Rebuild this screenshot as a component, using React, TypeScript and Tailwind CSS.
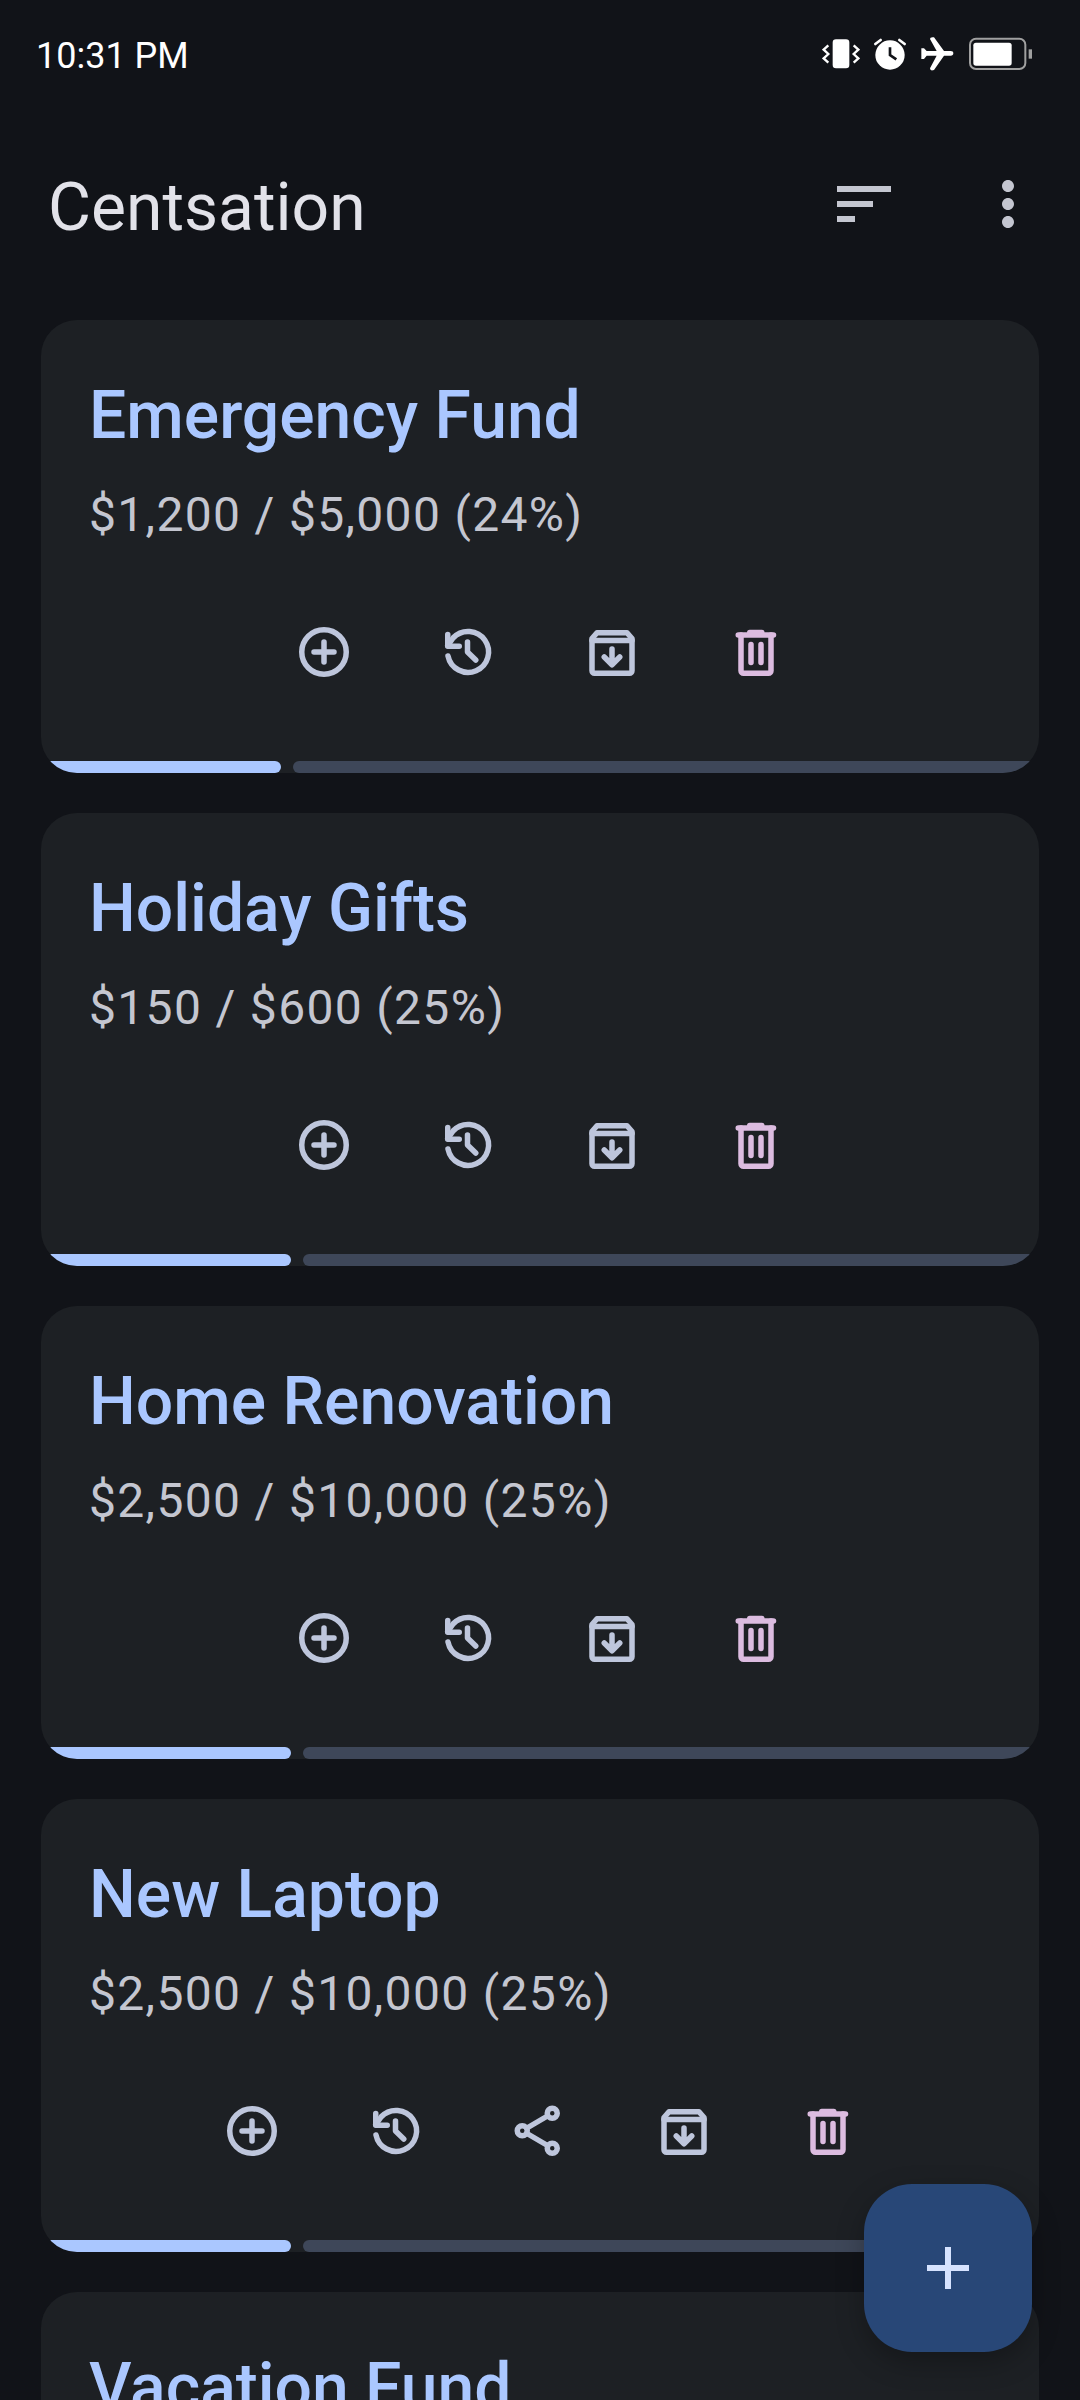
import React from "react";

const C = "#bec6dc";
const P = "#dcbce0";

const sp = {
  fill: "none",
  strokeWidth: 2.2,
  strokeLinecap: "round" as const,
  strokeLinejoin: "round" as const,
};

function Add() {
  return (
    <svg width="60" height="60" viewBox="0 0 24 24" stroke={C} {...sp}>
      <circle cx="12" cy="12" r="8.9" />
      <path d="M12 8v8M8 12h8" />
    </svg>
  );
}
function History() {
  return (
    <svg width="60" height="60" viewBox="0 0 24 24" stroke={C} {...sp}>
      <path d="M4 13.6A8.2 8.2 0 1 0 6.1 6.3L3.9 9.4" />
      <path d="M3.9 5v4.7h4.6" />
      <path d="M11.8 8v4l3.3 3.2" />
    </svg>
  );
}
function Share() {
  return (
    <svg width="60" height="60" viewBox="0 0 24 24" stroke={C} {...sp}>
      <circle cx="16.9" cy="4.9" r="2" />
      <circle cx="4.9" cy="11.9" r="2" />
      <circle cx="16.9" cy="18.9" r="2" />
      <path d="M6.8 10.8L15 6M6.8 13L15 17.8" />
    </svg>
  );
}
function Archive() {
  return (
    <svg width="60" height="60" viewBox="0 0 24 24" stroke={C} {...sp}>
      <path d="M6 4.3H18L20 6.6V19.5a1 1 0 0 1-1 1H5a1 1 0 0 1-1-1V6.6Z" />
      <path d="M4 7.4H20" />
      <path d="M12 10.8V16.8M8.9 14L12 17.1 15.1 14" />
    </svg>
  );
}
function Trash() {
  return (
    <svg width="60" height="60" viewBox="0 0 24 24" stroke={P} {...sp}>
      <path d="M4.9 5.2H19" />
      <path d="M9.5 4.2H14.3" />
      <path d="M6 5.2V19.5a1 1 0 0 0 1 1H17a1 1 0 0 0 1-1V5.2" />
      <path d="M10 9V16.2M14 9V16.2" />
    </svg>
  );
}

function Action({ children }: { children: React.ReactNode }) {
  return <div className="w-[144px] h-[144px] flex items-center justify-center">{children}</div>;
}

type G = { title: string; amount?: string; pct: number; share?: boolean };

const goals: G[] = [
  { title: "Emergency Fund", amount: "$1,200 / $5,000 (24%)", pct: 24 },
  { title: "Holiday Gifts", amount: "$150 / $600 (25%)", pct: 25 },
  { title: "Home Renovation", amount: "$2,500 / $10,000 (25%)", pct: 25 },
  { title: "New Laptop", amount: "$2,500 / $10,000 (25%)", pct: 25, share: true },
  { title: "Vacation Fund", pct: 25 },
];

function Card({ g }: { g: G }) {
  return (
    <div className="shrink-0 h-[453px] rounded-[36px] bg-[#1d2024] overflow-hidden flex flex-col">
      <div className="pt-[52px] pl-[48px]">
        <div className="text-[66px] leading-[88px] font-medium text-[#aac7ff]">{g.title}</div>
        {g.amount && (
          <div className="mt-[19px] text-[48px] leading-[72px] text-[#c4c6d0] tracking-[1.33px]">{g.amount}</div>
        )}
      </div>
      {g.amount && (
        <div className="mt-[29px] flex justify-center">
          <Action><Add /></Action>
          <Action><History /></Action>
          {g.share && <Action><Share /></Action>}
          <Action><Archive /></Action>
          <Action><Trash /></Action>
        </div>
      )}
      <div className="mt-auto flex h-[12px] gap-[12px]">
        <div className="rounded-[6px] bg-[#aac7ff]" style={{ width: `${g.pct}%` }} />
        <div className="flex-1 rounded-[6px] bg-[#3e4759]" />
      </div>
    </div>
  );
}

export default function App() {
  return (
    <div
      className="relative w-[1080px] h-[2400px] overflow-hidden bg-[#111318] flex flex-col"
      style={{ fontFamily: "Roboto, sans-serif" }}
    >
      <div className="h-[108px] shrink-0 flex items-center justify-between pl-[36px] pr-[47px]">
        <span className="pt-[4px] text-[36px] leading-[48px] text-white">10:31 PM</span>
        <div className="flex items-center">
          <svg width="38" height="36" viewBox="126 48 114 108">
            <rect x="158" y="58" width="50" height="87" rx="10" fill="#fff" />
            <path d="M145 76L131 89L145 102L131 115L145 128" fill="none" stroke="#fff" strokeWidth="7" />
            <path d="M221 76L235 89L221 102L235 115L221 128" fill="none" stroke="#fff" strokeWidth="7" />
          </svg>
          <svg width="34" height="36" viewBox="279 48 102 108" className="ml-[13px]">
            <circle cx="330" cy="105" r="44" fill="#fff" />
            <path d="M286 72L302 60M374 72L358 60" stroke="#fff" strokeWidth="8" strokeLinecap="round" />
            <path d="M330 82V105L349 118" fill="none" stroke="#111318" strokeWidth="8" />
          </svg>
          <svg width="34" height="36" viewBox="420 48 102 108" className="ml-[13px]">
            <path
              d="M424 85L432 85L440 93L470 93L450 57Q450 50 462 52L492 93L512 93Q520 93 520 100Q520 107 512 107L492 107L462 150Q450 154 450 145L470 107L440 107L432 117L424 117Z"
              fill="#fff"
            />
          </svg>
          <svg width="64" height="36" viewBox="567 48 192 108" className="ml-[15px]">
            <rect x="570" y="56" width="166" height="91" rx="18" fill="none" stroke="#a0a0a0" strokeWidth="6" />
            <rect x="580" y="68" width="115" height="69" rx="8" fill="#fff" />
            <rect x="746" y="88" width="10" height="28" fill="#a0a0a0" />
          </svg>
        </div>
      </div>
      <div className="h-[192px] shrink-0 flex items-center pl-[48px] pr-[36px] gap-[72px]">
        <h1 className="flex-1 pt-[7px] text-[66px] leading-[88px] text-[#e2e2e9] font-normal">Centsation</h1>
        <svg width="72" height="72" viewBox="0 0 24 24" fill="#c4c6d0">
          <path d="M3 18h6v-2H3v2zM3 6v2h18V6H3zm0 7h12v-2H3v2z" />
        </svg>
        <svg width="72" height="72" viewBox="0 0 24 24" fill="#c4c6d0">
          <path d="M12 8c1.1 0 2-.9 2-2s-.9-2-2-2-2 .9-2 2 .9 2 2 2zm0 2c-1.1 0-2 .9-2 2s.9 2 2 2 2-.9 2-2-.9-2-2-2zm0 6c-1.1 0-2 .9-2 2s.9 2 2 2 2-.9 2-2-.9-2-2-2z" />
        </svg>
      </div>
      <div className="flex flex-col gap-[40px] pl-[41px] pr-[41px] mt-[20px]">
        {goals.map((g) => (
          <Card key={g.title} g={g} />
        ))}
      </div>
      <button className="absolute left-[864px] top-[2184px] w-[168px] h-[168px] rounded-[48px] bg-[#284777] flex items-center justify-center shadow-[0_10px_28px_rgba(0,0,0,0.28)]">
        <svg width="72" height="72" viewBox="0 0 24 24" fill="#d6e3ff">
          <path d="M19 13h-6v6h-2v-6H5v-2h6V5h2v6h6v2z" />
        </svg>
      </button>
    </div>
  );
}
